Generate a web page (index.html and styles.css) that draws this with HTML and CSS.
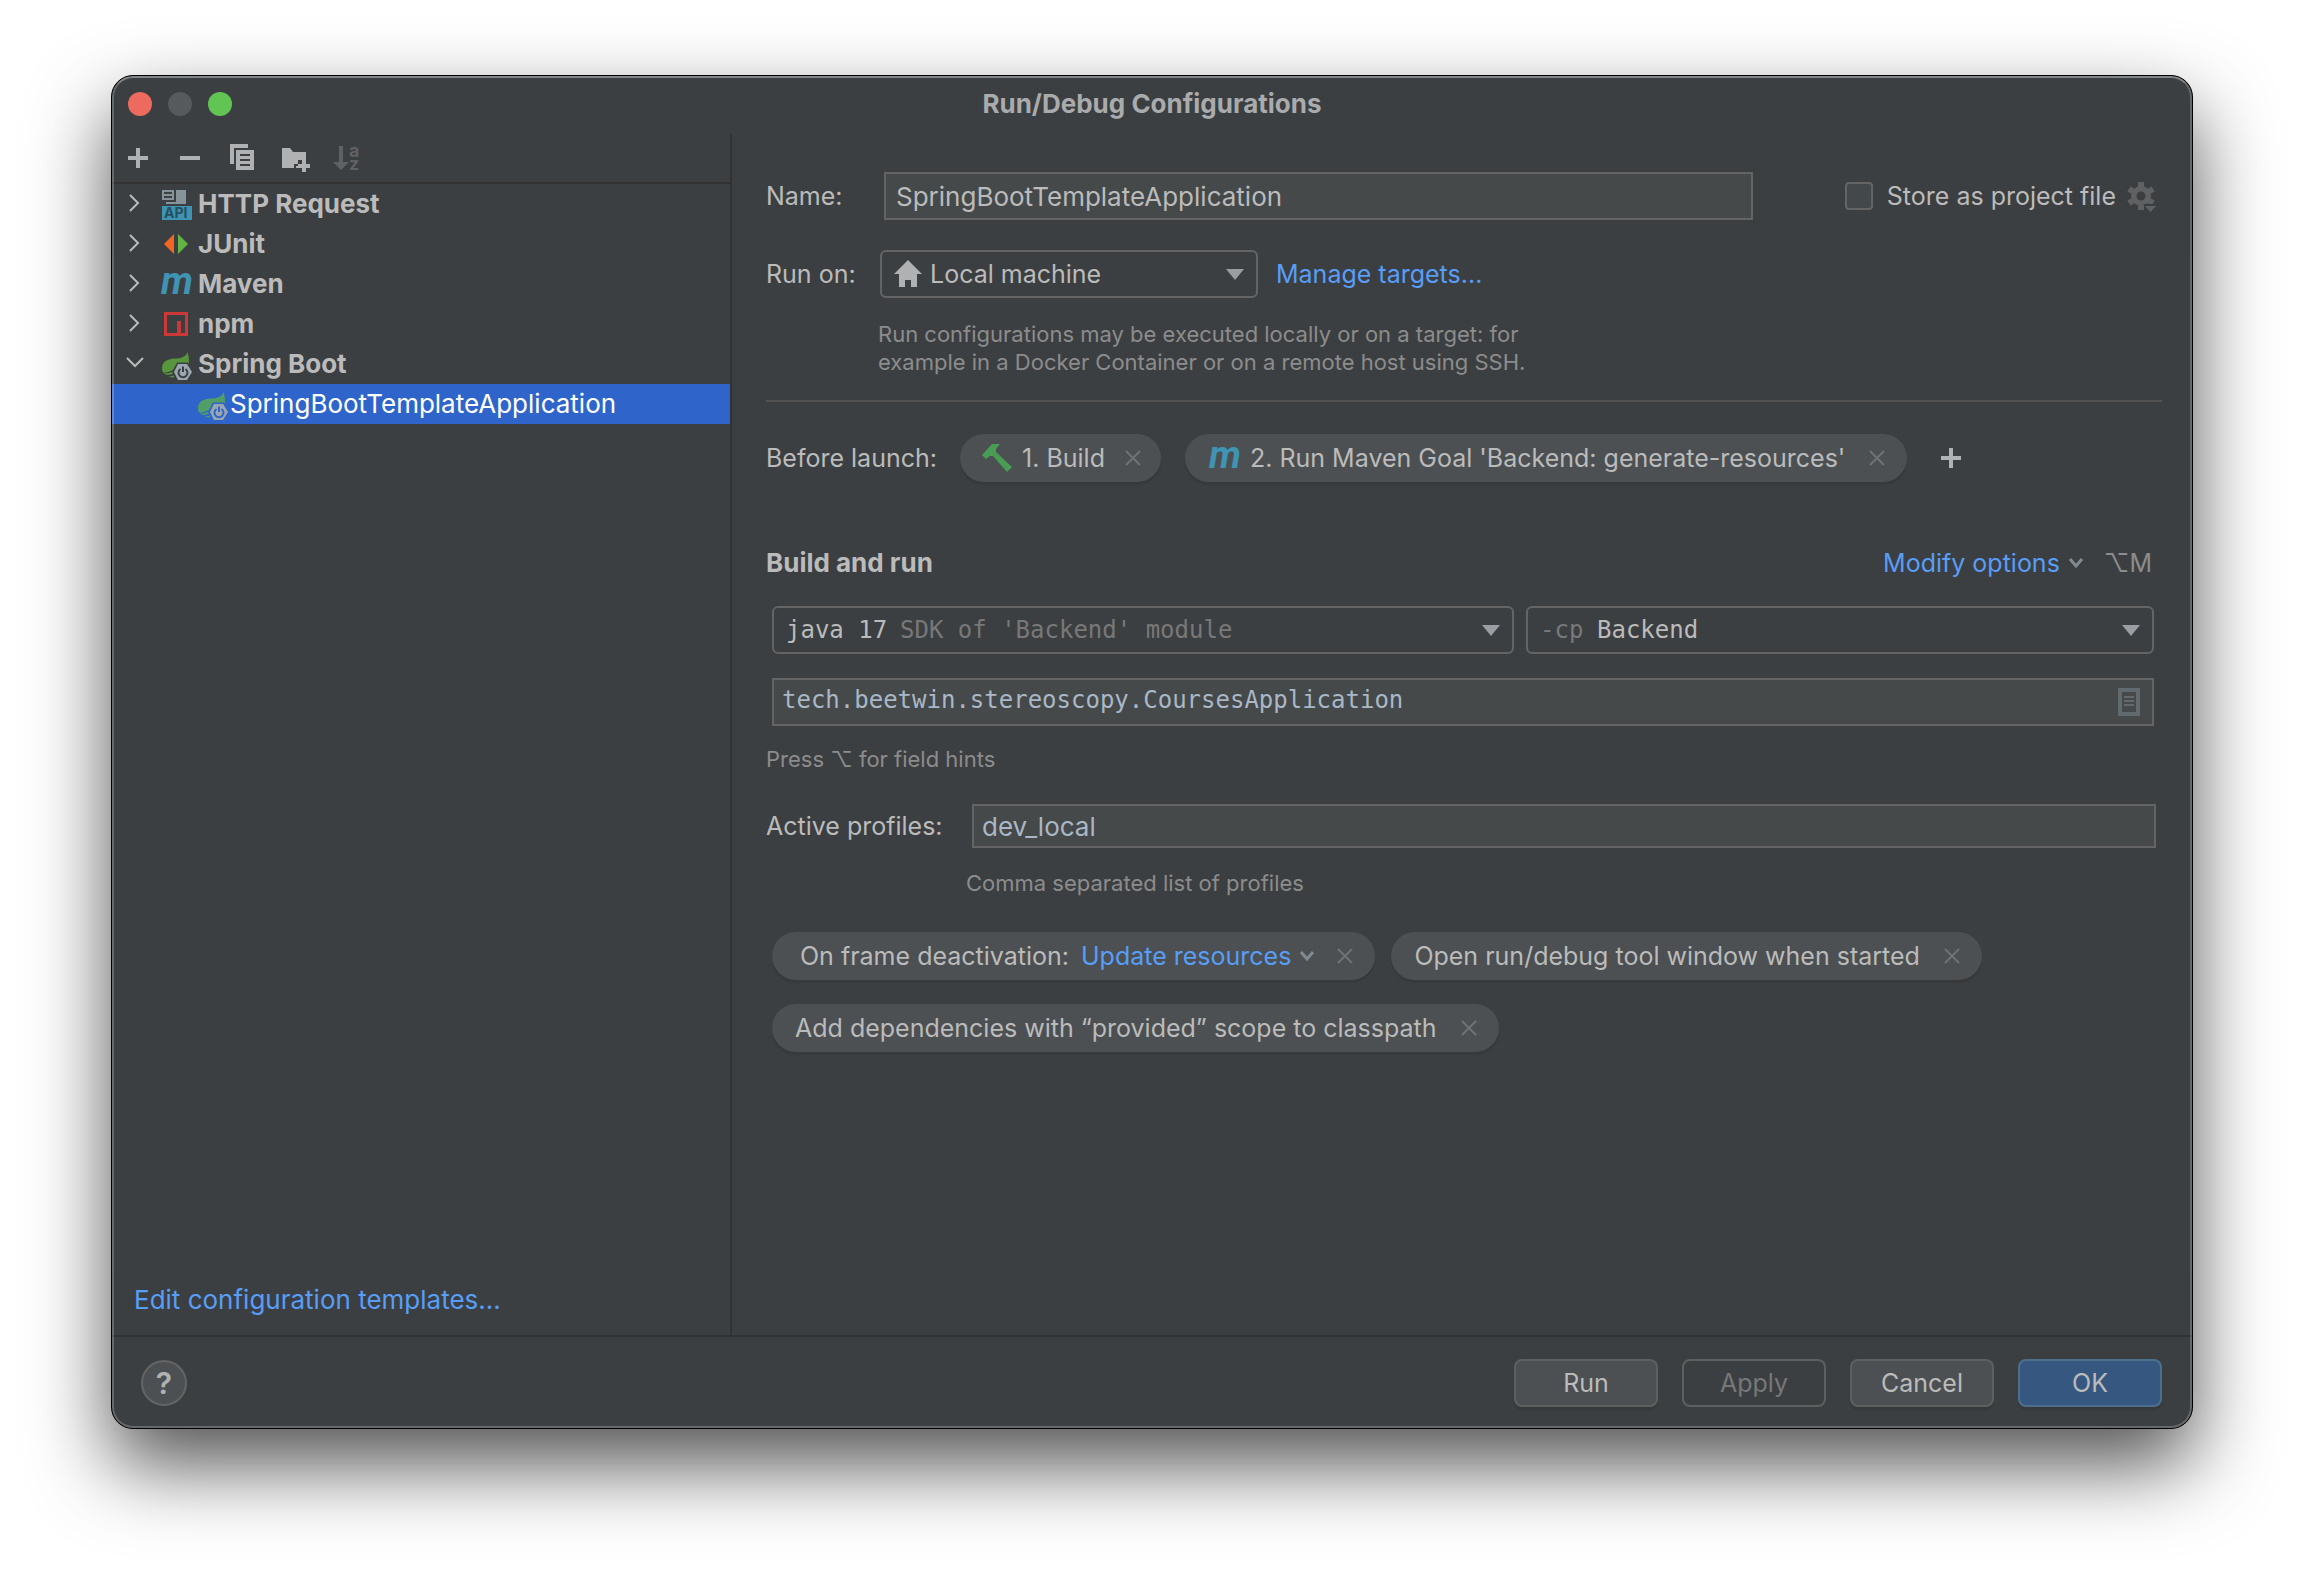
FILE: index.html
```html
<!DOCTYPE html>
<html lang="en">
<head>
<meta charset="utf-8">
<title>Run/Debug Configurations</title>
<meta name="viewport" content="width=device-width, initial-scale=1">
<link rel="stylesheet" href="styles.css">
</head>
<body>
<svg class="defs" aria-hidden="true">
  <symbol id="close" viewBox="0 0 16 16"><path d="M1 1L15 15M15 1L1 15" fill="none" stroke="currentColor" stroke-width="2"/></symbol>
  <symbol id="arrow" viewBox="0 0 18 11"><path d="M0 0H18L9 11Z" fill="currentColor"/></symbol>
  <symbol id="chevron-right" viewBox="0 0 32 32"><path d="M12 7L20 15L12 23" fill="none" stroke="currentColor" stroke-width="2"/></symbol>
  <symbol id="chevron-down" viewBox="0 0 32 32"><path d="M9 10L17 18L25 10" fill="none" stroke="currentColor" stroke-width="2"/></symbol>
  <symbol id="chevron-small" viewBox="0 0 16 12"><path d="M2 2L8 9L14 2" fill="none" stroke="currentColor" stroke-width="3"/></symbol>
  <symbol id="plus" viewBox="0 0 20 20"><path d="M8 0H12V8H20V12H12V20H8V12H0V8H8Z" fill="currentColor"/></symbol>
  <symbol id="maven" viewBox="0 0 32 32"><text class="maven-letter" x="1" y="26" fill="#3f93b3">m</text></symbol>
  <symbol id="spring" viewBox="0 0 32 32">
    <path class="leaf" d="M27.500 4C30 12 29 17 27 20L14 25C10 28 2 28 2 20C2 12 10 10.500 17 10.500C23 10 26 8 27.500 4Z"/>
    <path class="gap" d="M3 25C9 26.500 16 23 21 16C17 21 10 24 3 25Z"/>
    <path class="leaf" d="M8 29L14 27.500V29.500Z"/>
    <path class="gap" d="M12 24L17 14.500H28L33 24L28 33H17Z"/>
    <path d="M14 24L18 16H27L32 24L27 32H18Z" fill="#9aa7b0"/>
    <path class="power" d="M20.500 21A4.500 4.500 0 1 0 25.500 21M23 18.500V24" fill="none" stroke-width="2"/>
  </symbol>
</svg>

<main class="window">
  <header class="titlebar">
    <div class="lights">
      <button class="light light-close" type="button" aria-label="Close window"></button>
      <button class="light light-min" type="button" aria-label="Minimize window" disabled></button>
      <button class="light light-zoom" type="button" aria-label="Zoom window"></button>
    </div>
    <h1 class="title">Run/Debug Configurations</h1>
  </header>

  <div class="content">
    <aside class="sidebar">
      <div class="toolbar">
        <button class="tool" type="button" aria-label="Add"><svg viewBox="0 0 32 32"><path d="M14 6H18V14H26V18H18V26H14V18H6V14H14Z"/></svg></button>
        <button class="tool" type="button" aria-label="Remove"><svg viewBox="0 0 32 32"><path d="M6 14H26V18H6Z"/></svg></button>
        <button class="tool" type="button" aria-label="Copy"><svg viewBox="0 0 32 32"><path d="M4 2H22V6H8V22H4Z"/><path fill-rule="evenodd" d="M10 8H28V28H10ZM14 12V14H24V12ZM14 17V19H24V17ZM14 22V24H24V22Z"/></svg></button>
        <button class="tool" type="button" aria-label="New folder"><svg viewBox="0 0 32 32"><path d="M4 6H12L15 10H28V18H20V22H16V26H4Z"/><path d="M24 18H28V22H32V26H28V30H24V26H18V24H20V22H24Z"/></svg></button>
        <button class="tool" type="button" aria-label="Sort" disabled><svg viewBox="0 0 32 32"><path d="M9 4H13V20H19L11 28L3 20H9Z"/><text class="sort-letter"><tspan x="19" y="15">a</tspan><tspan x="19" y="28">z</tspan></text></svg></button>
      </div>

      <ul class="tree">
        <li class="node">
          <button class="toggle" type="button" aria-label="Expand HTTP Request"><svg><use href="#chevron-right"/></svg></button>
          <svg class="icon" viewBox="0 0 32 32"><path fill="#87939a" fill-rule="evenodd" d="M2 2H14V12H2ZM4 4V6H12V4ZM4 8V10H12V8ZM16 2H26V16H6V14H16Z"/><path fill="#3f93b3" d="M2 18H32V32H2Z"/><text class="api" x="4" y="30">API</text></svg>
          <span class="node-label">HTTP Request</span>
        </li>
        <li class="node">
          <button class="toggle" type="button" aria-label="Expand JUnit"><svg><use href="#chevron-right"/></svg></button>
          <svg class="icon" viewBox="0 0 32 32"><path fill="#f26522" d="M14 6V26L4 16Z"/><path fill="#62b543" d="M18 6V26L28 16Z"/></svg>
          <span class="node-label">JUnit</span>
        </li>
        <li class="node">
          <button class="toggle" type="button" aria-label="Expand Maven"><svg><use href="#chevron-right"/></svg></button>
          <svg class="icon"><use href="#maven"/></svg>
          <span class="node-label">Maven</span>
        </li>
        <li class="node">
          <button class="toggle" type="button" aria-label="Expand npm"><svg><use href="#chevron-right"/></svg></button>
          <svg class="icon" viewBox="0 0 32 32"><path fill="#cb3837" fill-rule="evenodd" d="M4 4H28V28H4ZM7 7V25H17V13H21V25H25V7Z"/></svg>
          <span class="node-label">npm</span>
        </li>
        <li class="node">
          <button class="toggle" type="button" aria-label="Collapse Spring Boot"><svg><use href="#chevron-down"/></svg></button>
          <svg class="icon"><use href="#spring"/></svg>
          <span class="node-label">Spring Boot</span>
        </li>
        <li class="node node-child node-selected">
          <svg class="icon"><use href="#spring"/></svg>
          <span>SpringBootTemplateApplication</span>
        </li>
      </ul>

      <a class="link templates" href="#">Edit configuration templates...</a>
    </aside>

    <form class="settings">
      <div class="row">
        <label class="row-label" for="name">Name:</label>
        <input class="field name-field" id="name" type="text" value="SpringBootTemplateApplication">
        <div class="store">
          <input class="check" id="store" type="checkbox">
          <label for="store">Store as project file</label>
          <button class="gear" type="button" aria-label="Storage options" disabled><svg viewBox="0 0 32 32"><g fill="#606162"><path d="M12 2H18V30H12Z"/><path d="M12 2H18V30H12Z" transform="rotate(60 15 16)"/><path d="M12 2H18V30H12Z" transform="rotate(120 15 16)"/><circle cx="15" cy="16" r="10"/></g><circle cx="15" cy="16" r="4.500" fill="#3c3f41"/><path d="M17 24H32L24.500 34Z" fill="#3c3f41"/><path d="M19 26H30L24.500 32Z" fill="#606162"/></svg></button>
        </div>
      </div>

      <div class="row target-row">
        <label class="row-label" for="target">Run on:</label>
        <div class="combo target">
          <select class="select target-select" id="target"><option>Local machine</option></select>
          <svg class="combo-home" viewBox="0 0 28 28"><path d="M14 0L28 14H23V27H17V20H11V27H5V14H0Z" fill="#afb1b3"/></svg>
          <svg class="combo-arrow"><use href="#arrow"/></svg>
        </div>
        <a class="link" href="#">Manage targets...</a>
      </div>
      <p class="hint target-hint">Run configurations may be executed locally or on a target: for<br>example in a Docker Container or on a remote host using SSH.</p>

      <hr class="rule">

      <div class="row launch">
        <span class="launch-label">Before launch:</span>
        <div class="chip chip-task">
          <svg class="icon" viewBox="0 0 32 32"><path fill="#499c54" d="M2 13L12 2H20L16 7V10L32 25L27 30L13 14H10L6 17Z"/></svg>
          <span>1. Build</span>
          <button class="remove" type="button" aria-label="Remove Build"><svg><use href="#close"/></svg></button>
        </div>
        <div class="chip chip-maven">
          <svg class="icon"><use href="#maven"/></svg>
          <span>2. Run Maven Goal 'Backend: generate-resources'</span>
          <button class="remove" type="button" aria-label="Remove Maven goal"><svg><use href="#close"/></svg></button>
        </div>
        <button class="add" type="button" aria-label="Add task"><svg><use href="#plus"/></svg></button>
      </div>

      <div class="section-head">
        <h2 class="section-title">Build and run</h2>
        <button class="menu-link" type="button">Modify options <svg><use href="#chevron-small"/></svg></button>
        <kbd class="shortcut">⌥M</kbd>
      </div>

      <div class="build">
        <div class="combo">
          <select class="select mono" aria-label="Java version"><option>java 17</option></select>
          <span class="mono combo-note note-after">SDK of 'Backend' module</span>
          <svg class="combo-arrow"><use href="#arrow"/></svg>
        </div>
        <div class="combo">
          <select class="select mono module-select" aria-label="Classpath module"><option>Backend</option></select>
          <span class="mono combo-note note-before">-cp</span>
          <svg class="combo-arrow"><use href="#arrow"/></svg>
        </div>
        <div class="combo main-class">
          <input class="field mono code" type="text" aria-label="Main class" value="tech.beetwin.stereoscopy.CoursesApplication">
          <button class="browse" type="button" aria-label="Browse classes"><svg viewBox="0 0 22 28"><path fill="#616a6f" fill-rule="evenodd" d="M0 0H22V28H0ZM4 4V24H18V4ZM6 8H16V10H6ZM6 12H16V14H6ZM6 16H16V18H6Z"/></svg></button>
        </div>
      </div>
      <p class="hint press-hint">Press ⌥ for field hints</p>

      <div class="row profiles">
        <label class="profiles-label" for="profiles">Active profiles:</label>
        <input class="field field-low code" id="profiles" type="text" value="dev_local">
      </div>
      <p class="hint profiles-hint">Comma separated list of profiles</p>

      <div class="options">
        <div class="chip option-wide">
          <span>On frame deactivation:</span>
          <button class="menu-link" type="button">Update resources <svg><use href="#chevron-small"/></svg></button>
          <button class="remove" type="button" aria-label="Remove frame deactivation"><svg><use href="#close"/></svg></button>
        </div>
        <div class="chip">
          <span>Open run/debug tool window when started</span>
          <button class="remove" type="button" aria-label="Remove tool window option"><svg><use href="#close"/></svg></button>
        </div>
        <div class="chip">
          <span>Add dependencies with “provided” scope to classpath</span>
          <button class="remove" type="button" aria-label="Remove classpath option"><svg><use href="#close"/></svg></button>
        </div>
      </div>
    </form>
  </div>

  <footer class="actions">
    <button class="help" type="button" aria-label="Help">?</button>
    <button class="button" type="button">Run</button>
    <button class="button" type="button" disabled>Apply</button>
    <button class="button" type="button">Cancel</button>
    <button class="button button-primary" type="button">OK</button>
  </footer>
</main>
</body>
</html>
```
FILE: styles.css
```css
:root {
  --panel: #3c3f41;
  --text: #bbbbbb;
  --muted: #8c8c8c;
  --border: #646464;
  --line: #323232;
  --link: #589df6;
  --raised: #4c5052;
  --field: #45494a;
  --leaf: #57963d;
  --icon-gap: #3c3f41;
  --ui: Inter, "Liberation Sans", "DejaVu Sans", sans-serif;
}

* {
  box-sizing: border-box;
}

body {
  display: flex;
  min-height: 100vh;
  margin: 0;
  padding: 75px 111px 147px;
  background: #ffffff;
  color: var(--text);
  font: 25px/32px var(--ui);
}

button,
input,
select {
  margin: 0;
  padding: 0;
  border: 0;
  background: none;
  color: inherit;
  font: inherit;
}

svg {
  display: block;
  flex: none;
  fill: currentColor;
}

h1,
h2,
p,
ul {
  margin: 0;
  padding: 0;
}

.defs {
  display: none;
}

.link,
.menu-link {
  color: var(--link);
  text-decoration: none;
  white-space: nowrap;
}

.icon {
  width: 32px;
  height: 32px;
  overflow: visible;
}

/* Window frame */

.window {
  position: relative;
  display: flex;
  flex: 1;
  flex-direction: column;
  min-width: 0;
  border: 1px solid #000000;
  border-radius: 22px;
  background: var(--panel);
  box-shadow: 0 36px 80px rgba(0, 0, 0, 0.68);
  overflow: clip;
}

.window::after {
  position: absolute;
  inset: 0;
  border: 2px solid rgba(255, 255, 255, 0.22);
  border-top-color: rgba(255, 255, 255, 0.36);
  border-radius: 21px;
  content: "";
  pointer-events: none;
}

.titlebar {
  display: grid;
  grid-template-columns: 1fr auto 1fr;
  align-items: center;
  height: 58px;
  padding: 0 16px 2px;
}

.lights {
  display: flex;
  gap: 16px;
}

.light {
  width: 24px;
  height: 24px;
  border-radius: 50%;
}

.light-close {
  background: #ed6a5e;
}

.light-min {
  background: #565a5c;
}

.light-zoom {
  background: #61c554;
}

.title {
  color: #a9abac;
  font-size: 26px;
  font-weight: 700;
}

.content {
  display: grid;
  flex: 1;
  grid-template-columns: 620px minmax(0, 1fr);
}

/* Configuration tree */

.sidebar {
  display: flex;
  flex-direction: column;
  border-right: 2px solid var(--line);
  font-size: 26px;
}

.toolbar {
  display: flex;
  gap: 20px;
  height: 50px;
  padding: 7px 10px;
  border-bottom: 2px solid var(--line);
  color: #afb1b3;
}

.tool svg {
  width: 32px;
  height: 32px;
  overflow: visible;
}

.tool:disabled {
  color: #606162;
}

.sort-letter {
  font: 700 18px/1 var(--ui);
}

.tree {
  flex: 1;
  list-style: none;
}

.node {
  display: flex;
  gap: 6px;
  align-items: center;
  height: 40px;
  padding-left: 6px;
}

.node-label {
  font-weight: 700;
}

.toggle {
  width: 36px;
}

.toggle svg {
  width: 32px;
  height: 32px;
}

.node-child {
  gap: 2px;
  padding-left: 84px;
}

.node-selected {
  --leaf: #519e66;
  --icon-gap: #2f65ca;
  background: #2f65ca;
  color: #ffffff;
}

.leaf {
  fill: var(--leaf);
}

.gap {
  fill: var(--icon-gap);
}

.power {
  stroke: var(--icon-gap);
}

.api {
  fill: #24505f;
  font: 700 14px/1 var(--ui);
}

.maven-letter {
  font: italic 700 38px/1 Roboto, sans-serif;
}

.templates {
  padding: 0 22px 19px;
}

/* Settings form */

.settings {
  padding: 38px 30px 0 34px;
}

.row {
  display: flex;
  align-items: center;
}

.row-label {
  width: 114px;
}

.field {
  flex: 1;
  width: 100%;
  min-width: 0;
  height: 48px;
  padding: 0 10px;
  border: 2px solid var(--border);
  background: var(--field);
  font-size: 26px;
}

.field-low {
  height: 44px;
  padding: 0 8px;
}

.code {
  color: #a9b7c6;
}

.mono {
  font-family: "DejaVu Sans Mono", monospace;
  font-size: 24px;
}

.name-field {
  margin: 0 92px 0 4px;
}

.store {
  display: flex;
  gap: 14px;
  align-items: center;
  white-space: nowrap;
}

.check {
  width: 28px;
  height: 28px;
  border: 2px solid var(--border);
  border-radius: 4px;
  background: #43494a;
  appearance: none;
}

.gear {
  margin: 0 4px 0 -4px;
}

.gear svg {
  width: 32px;
  height: 32px;
}

.target-row {
  margin-top: 30px;
}

.target-row .link {
  margin-left: 18px;
}

.combo {
  display: grid;
  align-items: center;
}

.combo > * {
  grid-area: 1 / 1;
}

.target {
  width: 378px;
}

.select {
  width: 100%;
  height: 48px;
  padding: 0 40px 0 12px;
  border: 2px solid var(--border);
  border-radius: 6px;
  appearance: none;
}

.select option {
  background: var(--panel);
}

.target-select {
  padding-left: 48px;
}

.combo-home {
  width: 28px;
  height: 28px;
  margin-left: 14px;
  pointer-events: none;
}

.combo-arrow {
  justify-self: end;
  width: 18px;
  height: 11px;
  margin-right: 14px;
  color: #9a9da1;
  pointer-events: none;
}

.combo-note {
  color: #787878;
  pointer-events: none;
}

.note-after {
  margin-left: 128px;
}

.note-before {
  margin-left: 14px;
}

.module-select {
  padding-left: 69px;
}

.hint {
  color: var(--muted);
  font-size: 22px;
  line-height: 28px;
}

.target-hint {
  margin: 22px 0 0 112px;
}

.rule {
  height: 2px;
  margin: 24px 0 32px;
  border: 0;
  background: #515151;
}

.launch-label {
  width: 194px;
}

.chip {
  display: flex;
  gap: 10px;
  align-items: center;
  height: 48px;
  padding: 0 22px 0 23px;
  border-radius: 24px;
  background: var(--raised);
  box-shadow: 0 3px 1px #37393b;
  white-space: nowrap;
}

.chip-task {
  padding: 0 20px;
}

.chip-maven {
  margin-left: 24px;
}

.remove {
  padding: 0 0 0 10px;
  color: #6e7375;
}

.remove svg {
  width: 16px;
  height: 18px;
}

.chip > span + .remove {
  padding-left: 14px;
}

.chip-task > span + .remove {
  padding-left: 10px;
}

.add {
  margin-left: 34px;
  color: #afb1b3;
}

.add svg {
  width: 20px;
  height: 20px;
}

.section-head {
  display: flex;
  align-items: center;
  margin-top: 65px;
  padding-right: 10px;
}

.section-title {
  flex: 1;
  font-size: 26px;
  font-weight: 700;
}

.menu-link {
  display: flex;
  gap: 8px;
  align-items: center;
}

.menu-link svg {
  width: 16px;
  height: 12px;
  color: #7f8b91;
}

.shortcut {
  margin-left: 20px;
  color: var(--muted);
  font: inherit;
}

.build {
  display: grid;
  grid-template-columns: 742fr 628fr;
  gap: 24px 12px;
  margin-top: 27px;
  padding: 0 8px 0 6px;
}

.main-class {
  grid-column: 1 / -1;
}

.main-class .field {
  padding: 0 50px 4px 8px;
}

.browse {
  justify-self: end;
  margin-right: 14px;
}

.browse svg {
  width: 22px;
  height: 28px;
}

.press-hint {
  margin-top: 19px;
}

.profiles {
  margin-top: 31px;
  padding-right: 6px;
}

.profiles-label {
  width: 206px;
}

.profiles-hint {
  margin: 21px 0 0 200px;
}

.options {
  display: flex;
  flex-wrap: wrap;
  gap: 24px 16px;
  margin: 35px 100px 0 6px;
}

.option-wide {
  gap: 12px;
  padding-left: 28px;
}

/* Dialog actions */

.actions {
  display: flex;
  gap: 24px;
  align-items: center;
  height: 93px;
  padding: 0 30px 0 29px;
  border-top: 2px solid var(--line);
}

.help {
  width: 46px;
  height: 46px;
  margin-right: auto;
  border: 2px solid var(--border);
  border-radius: 50%;
  background: var(--raised);
  color: #afb1b3;
  font-size: 30px;
  font-weight: 600;
}

.button {
  width: 144px;
  height: 48px;
  border: 2px solid #5e6060;
  border-radius: 8px;
  background: var(--raised);
  box-shadow: 0 3px 1px #37393b;
}

.button:disabled {
  background: none;
  box-shadow: none;
  color: #777777;
}

.button-primary {
  border-color: #4c708c;
  background: #365880;
}
```
